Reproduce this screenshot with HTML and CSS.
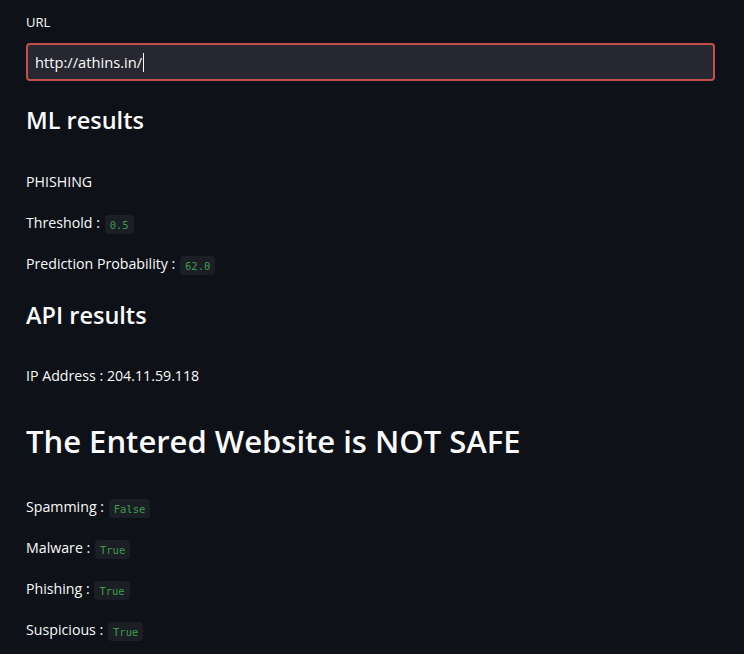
FILE: index.html
```html
<!DOCTYPE html>
<html>
<head>
<meta charset="utf-8">
<link rel="stylesheet" href="styles.css">
</head>
<body>
<main class="page">
  <label class="label">URL</label>
  <div class="input"><span class="value">http://athins.in/</span><span class="caret"></span></div>
  <h2 class="h2 h2-ml">ML results</h2>
  <p class="p p-after-h2">PHISHING</p>
  <p class="p">Threshold : <code class="code">0.5</code></p>
  <p class="p">Prediction Probability : <code class="code">62.0</code></p>
  <h2 class="h2 h2-api">API results</h2>
  <p class="p p-after-h2">IP Address : 204.11.59.118</p>
  <h1 class="h1">The Entered Website is NOT SAFE</h1>
  <p class="p p-after-h1">Spamming : <code class="code">False</code></p>
  <p class="p">Malware : <code class="code">True</code></p>
  <p class="p">Phishing : <code class="code">True</code></p>
  <p class="p">Suspicious : <code class="code">True</code></p>
</main>
</body>
</html>
```
FILE: styles.css
```css
html, body {
  margin: 0;
  padding: 0;
  background: #0e1117;
  color: #fafafa;
  font-family: "Open Sans", "Noto Sans", sans-serif;
}
.page {
  padding: 12px 29px 0 26px;
  display: flex;
  flex-direction: column;
  align-items: flex-start;
}
.label {
  font-size: 13px;
  line-height: 20px;
  height: 20px;
}
.input {
  margin-top: 11px;
  align-self: stretch;
  box-sizing: border-box;
  height: 38px;
  background: #262730;
  border: 2px solid #c4504d;
  border-radius: 4px;
  display: flex;
  align-items: center;
  padding-left: 7px;
}
.value {
  font-size: 14.7px;
}
.caret {
  width: 1px;
  height: 19px;
  margin-left: 1px;
  background: #fafafa;
}
.h2 {
  font-size: 23.5px;
  font-weight: 600;
  line-height: 32px;
  margin: 0;
}
.h2-ml { margin-top: 23px; }
.h2-api { margin-top: 23px; }
.p {
  margin: 17px 0 0;
  font-size: 14.2px;
  font-weight: 500;
  line-height: 24px;
}
.p-after-h2 { margin-top: 33px; }
.h2-ml + .p-after-h2 { margin-top: 34px; }
.p-after-h1 { margin-top: 32px; }
.code {
  font-family: "DejaVu Sans Mono", monospace;
  font-size: 10.5px;
  font-weight: 400;
  line-height: 14px;
  color: #3f9b4c;
  background: #1b1e25;
  border-radius: 4px;
  padding: 3px 5px 2px;
  margin-left: 1px;
  display: inline-block;
  vertical-align: middle;
}
.h1 {
  font-size: 31px;
  font-weight: 600;
  line-height: 44px;
  margin: 31px 0 0;
}
```
